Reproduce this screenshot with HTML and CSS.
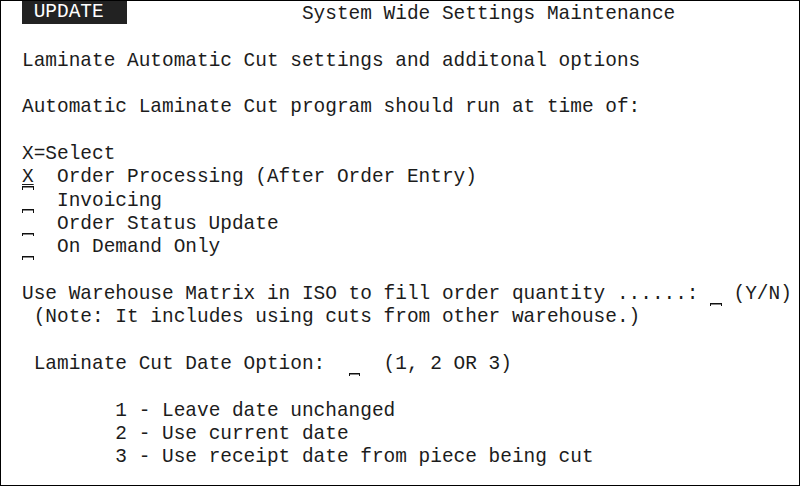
FILE: index.html
```html
<!DOCTYPE html>
<html>
<head>
<meta charset="utf-8">
<link rel="stylesheet" href="styles.css">
</head>
<body>
<div class="screen">
  <div class="row"><span class="mode"> UPDATE  </span><span>               System Wide Settings Maintenance</span></div>
  <div class="row"></div>
  <div class="row">Laminate Automatic Cut settings and additonal options</div>
  <div class="row"></div>
  <div class="row">Automatic Laminate Cut program should run at time of:</div>
  <div class="row"></div>
  <div class="row">X=Select</div>
  <div class="row"><span class="field"><u>X</u></span>  Order Processing (After Order Entry)</div>
  <div class="row"><span class="field"></span>  Invoicing</div>
  <div class="row"><span class="field"></span>  Order Status Update</div>
  <div class="row"><span class="field"></span>  On Demand Only</div>
  <div class="row"></div>
  <div class="row">Use Warehouse Matrix in ISO to fill order quantity ......: <span class="field"></span> (Y/N)</div>
  <div class="row"> (Note: It includes using cuts from other warehouse.)</div>
  <div class="row"></div>
  <div class="row"> Laminate Cut Date Option:  <span class="field"></span>  (1, 2 OR 3)</div>
  <div class="row"></div>
  <div class="row">        1 - Leave date unchanged</div>
  <div class="row">        2 - Use current date</div>
  <div class="row">        3 - Use receipt date from piece being cut</div>
</div>
</body>
</html>
```
FILE: styles.css
```css
html, body {
  margin: 0;
  padding: 0;
  background: #ffffff;
}
.screen {
  box-sizing: border-box;
  width: 800px;
  height: 486px;
  border: 1px solid #000;
  padding: 2px 0 0 21px;
  overflow: hidden;
  font-family: "Liberation Mono", "DejaVu Sans Mono", monospace;
  font-size: 19.44px;
  color: #1c1c1c;
}
.row {
  height: 23.33px;
  line-height: 23.33px;
  white-space: pre;
}
.mode {
  display: inline-block;
  background: #222;
  color: #fff;
  height: 24px;
  margin-top: -3px;
  line-height: 24px;
  vertical-align: top;
}
.field {
  display: inline-block;
  width: 1ch;
  height: 23.33px;
  vertical-align: top;
  background:
    linear-gradient(#111, #111) 0 calc(100% - 2px) / 100% 1.5px no-repeat,
    linear-gradient(#111, #111) 0 100% / 1px 3px no-repeat,
    linear-gradient(#111, #111) 100% 100% / 1px 3px no-repeat;
}
.field u {
  text-decoration-thickness: 1px;
  text-underline-offset: 2px;
}
```
